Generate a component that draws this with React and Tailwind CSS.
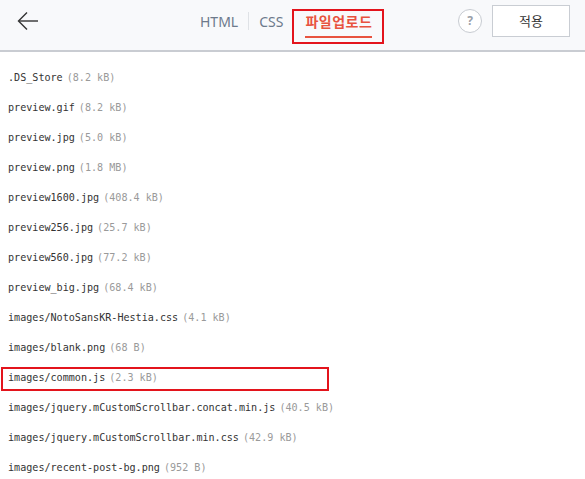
import React from 'react';

const files = [
  { name: '.DS_Store', size: '8.2 kB' },
  { name: 'preview.gif', size: '8.2 kB' },
  { name: 'preview.jpg', size: '5.0 kB' },
  { name: 'preview.png', size: '1.8 MB' },
  { name: 'preview1600.jpg', size: '408.4 kB' },
  { name: 'preview256.jpg', size: '25.7 kB' },
  { name: 'preview560.jpg', size: '77.2 kB' },
  { name: 'preview_big.jpg', size: '68.4 kB' },
  { name: 'images/NotoSansKR-Hestia.css', size: '4.1 kB' },
  { name: 'images/blank.png', size: '68 B' },
  { name: 'images/common.js', size: '2.3 kB', marked: true },
  { name: 'images/jquery.mCustomScrollbar.concat.min.js', size: '40.5 kB' },
  { name: 'images/jquery.mCustomScrollbar.min.css', size: '42.9 kB' },
  { name: 'images/recent-post-bg.png', size: '952 B' },
];

export default function App() {
  return (
    <div className="w-[585px] h-[479px] overflow-hidden bg-white" style={{ fontFamily: '"Noto Sans", "Noto Sans CJK KR", sans-serif' }}>
      {/* Header */}
      <div className="h-[52px] bg-[#f8f9fb] border-b-2 border-[#c9ccd2]">
        <div className="h-[42px] flex items-center pl-[17px] pr-[15px]">
          <button className="w-[22px] h-[20px] flex items-center justify-center">
            <svg width="22" height="20" viewBox="0 0 22 20" fill="none" stroke="#333" strokeWidth="1.4">
              <path d="M21 10H2" />
              <path d="M10 1.5L1.5 10L10 18.5" />
            </svg>
          </button>

          {/* Tabs */}
          <div className="ml-[161px] flex items-center text-[14px] text-[#6d7a8b]">
            <span>HTML</span>
            <span className="mx-[10px] w-px h-[18px] bg-[#dfe2e6]" />
            <span>CSS</span>
          </div>
          <div className="self-start mt-[9px] ml-[9px] border-2 border-[#e3141c] pl-[11px] pr-[10px] pt-[1px] h-[35px]">
            <div className="flex flex-col">
              <span className="text-[14px] leading-[20px] font-bold text-[#e8533f] tracking-[0.5px]">파일업로드</span>
              <span className="mt-[4px] h-[2px] bg-[#e8533f]" />
            </div>
          </div>

          {/* Right controls */}
          <div className="ml-auto flex items-center gap-[10px]">
            <div className="w-[24px] h-[24px] rounded-full border border-[#c7cbd1] bg-white flex items-center justify-center text-[12px] font-bold text-[#9aa0a8]">
              ?
            </div>
            <button className="w-[78px] h-[32px] bg-white border border-[#c9cdd3] text-[13px] text-[#333]" style={{ fontFamily: '"Noto Sans CJK KR", sans-serif' }}>
              적용
            </button>
          </div>
        </div>
      </div>

      {/* File list */}
      <div className="pt-[11px]" style={{ fontFamily: '"DejaVu Sans Mono", monospace' }}>
        {files.map((f) => (
          <div key={f.name} className="relative h-[30px] flex items-center pl-[8px] text-[10.1px]">
            {f.marked && (
              <span className="absolute left-[1px] top-[4px] w-[328px] h-[24px] border-2 border-[#e3141c]" />
            )}
            <span className="text-[#333]">{f.name}</span>
            <span className="ml-[4px] text-[#9a9a9a]">({f.size})</span>
          </div>
        ))}
      </div>
    </div>
  );
}
